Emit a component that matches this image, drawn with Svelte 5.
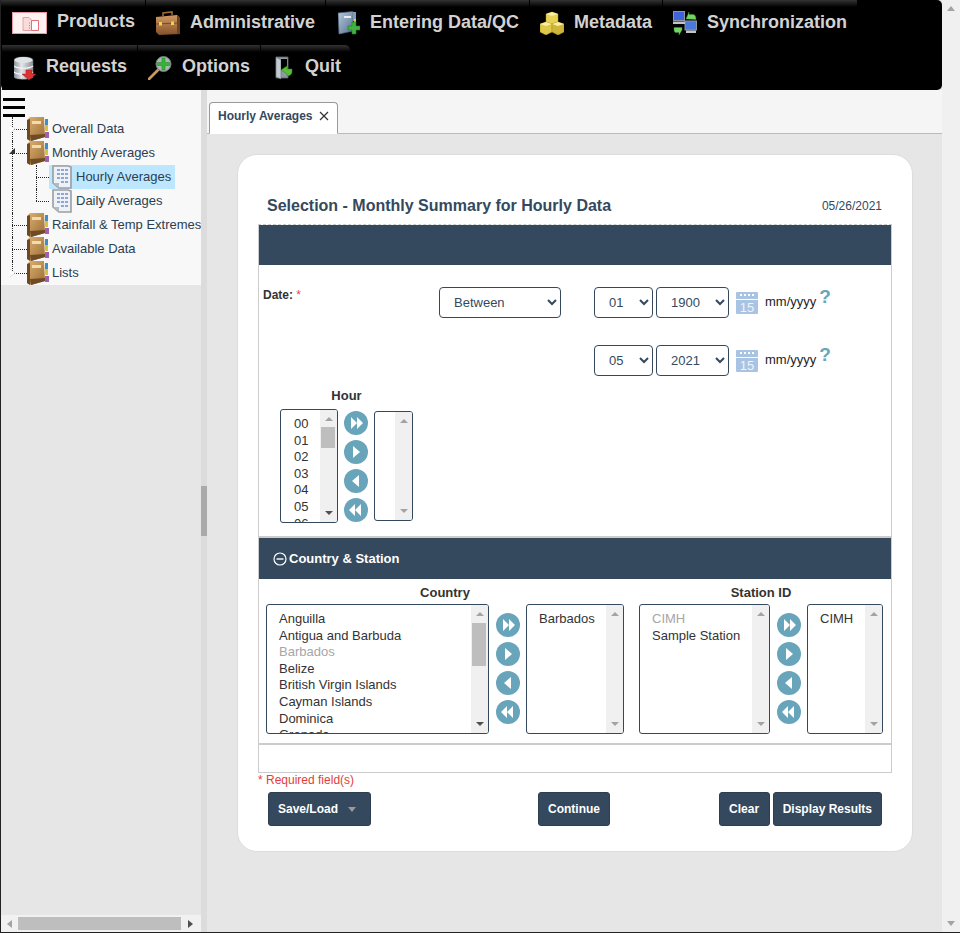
<script>
  const menuRows = [
    [
      { label: 'Products', icon: 'products' },
      { label: 'Administrative', icon: 'briefcase' },
      { label: 'Entering Data/QC', icon: 'docplus' },
      { label: 'Metadata', icon: 'cubes' },
      { label: 'Synchronization', icon: 'sync' },
    ],
    [
      { label: 'Requests', icon: 'database' },
      { label: 'Options', icon: 'magnifier' },
      { label: 'Quit', icon: 'door' },
    ],
  ];

  const tree = [
    { label: 'Overall Data', toggle: 'closed' },
    { label: 'Monthly Averages', toggle: 'open' },
    { label: 'Hourly Averages', child: true, selected: true },
    { label: 'Daily Averages', child: true, last: true },
    { label: 'Rainfall & Temp Extremes' },
    { label: 'Available Data' },
    { label: 'Lists', toggle: 'closed', end: true },
  ];

  const hours = ['00', '01', '02', '03', '04', '05', '06'];
  const countries = [
    'Anguilla',
    'Antigua and Barbuda',
    'Barbados',
    'Belize',
    'British Virgin Islands',
    'Cayman Islands',
    'Dominica',
    'Grenada',
  ];
  const arrows = ['M7 6l6 6-6 6zM13 6l6 6-6 6z', 'M9 6l7 6-7 6z', 'M15 6l-7 6 7 6z', 'M11 6l-6 6 6 6zM17 6l-6 6 6 6z'];
</script>

{#snippet menuIcon(name)}
  {#if name === 'products'}
    <svg class="ic-products" viewBox="0 0 35 22">
      <rect x="0.5" y="0.5" width="34" height="21" fill="#fdf1f1" stroke="#e8999f" />
      <path d="M11 5.500h6l3 3v10h-9z" fill="#f8dcdc" stroke="#e9a0a0" />
      <path d="M19.500 8.500h7v10h-7z" fill="#fff" stroke="#e56f76" />
      <path d="M17 11h1M17 13.500h1M17 16h1" stroke="#e56f76" />
    </svg>
  {:else if name === 'briefcase'}
    <svg viewBox="0 0 24 24">
      <defs>
        <linearGradient id="case" x1="0" y1="0" x2="0" y2="1"><stop offset="0" stop-color="#d29a62" /><stop offset="1" stop-color="#84502a" /></linearGradient>
      </defs>
      <path d="M7 5V2l9-1v3" fill="none" stroke="#9c6a38" stroke-width="1.600" />
      <path d="M0 6l21-2 3 3v16l-21 1-3-3z" fill="url(#case)" />
      <path d="M21 4l3 3v16l-3 .2z" fill="#6d4322" />
      <path d="M0 13l21-1" stroke="#7a4a25" />
      <rect x="3" y="11" width="3" height="3.500" fill="#ecd24f" />
      <rect x="15" y="10.500" width="3" height="3.500" fill="#ecd24f" />
    </svg>
  {:else if name === 'docplus'}
    <svg class="ic-narrow" viewBox="0 0 22 24">
      <defs>
        <linearGradient id="binder" x1="0" y1="0" x2="1" y2="1"><stop offset="0" stop-color="#b7cadb" /><stop offset="1" stop-color="#54708e" /></linearGradient>
      </defs>
      <path d="M0 2l15-1.500V20L1 23z" fill="url(#binder)" stroke="#51677f" stroke-width=".7" />
      <rect x="6" y="5" width="7" height="2" fill="#e6edf3" />
      <path d="M15 1h3v9h-3z" fill="#7c9cc0" />
      <path d="M16 8h2v3h-2z" fill="#e7c744" />
      <path d="M14 11h4v4h4v4h-4v4h-4v-4h-4v-4h4z" fill="#43b243" stroke="#1f7c25" stroke-width=".6" />
    </svg>
  {:else if name === 'cubes'}
    <svg viewBox="0 0 24 24">
      <path d="M6 3l6-2 6 2v8l-6 2-6-2z" fill="#e8d256" stroke="#a99326" stroke-width=".5" />
      <path d="M0 13l6-2 6 2v8l-6 3-6-3z" fill="#e0c848" stroke="#a99326" stroke-width=".5" />
      <path d="M12 13l6-2 6 2v8l-6 3-6-3z" fill="#cfb63a" stroke="#a99326" stroke-width=".5" />
      <path d="M0 13l6 2 6-2-6-2zM12 13l6 2 6-2-6-2zM6 3l6 2 6-2-6-2z" fill="#f9ef9f" />
    </svg>
  {:else if name === 'sync'}
    <svg viewBox="0 0 24 24">
      <rect x="0.500" y="0.500" width="11" height="9" fill="#3f63d8" stroke="#8d95a0" />
      <rect x="12" y="10" width="11.500" height="9" fill="#4a78df" stroke="#8d95a0" />
      <path d="M0 10.500h12v2.500H0zM13 19.500h10v2.500H13z" fill="#c2c6cb" />
      <path d="M13 8l3-7v2.500h4c2 0 3 2 3 5z" fill="#73d466" stroke="#3d9a35" stroke-width=".4" />
      <path d="M9 19l-3 5v-2.500H3c-2 0-2-2-2-5h8z" fill="#73d466" stroke="#3d9a35" stroke-width=".4" />
    </svg>
  {:else if name === 'database'}
    <svg class="ic-narrow" viewBox="0 0 22 24">
      <defs>
        <linearGradient id="cyl" x1="0" y1="0" x2="1" y2="0"><stop offset="0" stop-color="#8d959c" /><stop offset=".4" stop-color="#e3e6e9" /><stop offset="1" stop-color="#8a9097" /></linearGradient>
      </defs>
      <path d="M0 4c0-4 19-4 19 0v17c0 3-19 3-19 0z" fill="url(#cyl)" stroke="#788089" stroke-width=".5" />
      <ellipse cx="9.500" cy="4" rx="9" ry="3" fill="#dfe3e6" />
      <path d="M0 10c4 3 15 3 19 0M0 16c4 3 15 3 19 0" fill="none" stroke="#f4f5f6" stroke-width="1.200" />
      <path d="M12 14h6v4h4l-7 6-7-6h4z" fill="#dd3232" stroke="#a21c1c" stroke-width=".5" />
    </svg>
  {:else if name === 'magnifier'}
    <svg viewBox="0 0 24 24">
      <path d="M1 23L10 14" stroke="#c79a60" stroke-width="2.800" stroke-linecap="round" />
      <circle cx="15.500" cy="8" r="7.500" fill="#a9b6b6" stroke="#6f7a79" />
      <path d="M14 2h3v4.500h4.500v3H17V14h-3V9.500H9.500v-3H14z" fill="#38b338" stroke="#1c801f" stroke-width=".5" />
    </svg>
  {:else}
    <svg class="ic-door" viewBox="0 0 18 24">
      <path d="M1 1h12v21H1z" fill="#8f9aa1" stroke="#5d6972" stroke-width=".8" />
      <path d="M1 1l5 3v19l-5-2z" fill="#c3ccd2" stroke="#566067" stroke-width=".5" />
      <path d="M6 3h6v11H6z" fill="#000" />
      <path d="M6 14l6-4v3h5v3c0 2-2 4-5 4v-2z" fill="#5cbd36" stroke="#2d861a" stroke-width=".5" />
    </svg>
  {/if}
{/snippet}

{#snippet bookIcon()}
  <svg class="tree-icon" viewBox="0 0 22 24">
    <defs>
      <linearGradient id="bookFace" x1="0" y1="0" x2="1" y2="1"><stop offset="0" stop-color="#dcb271" /><stop offset="1" stop-color="#9a6a34" /></linearGradient>
    </defs>
    <path d="M0 3l3-3h14l1 20-14 4-4-2z" fill="url(#bookFace)" />
    <path d="M0 3l3-1v22l-3-2z" fill="#6e4822" />
    <path d="M3 18l15-1v3L4 24z" fill="#6f4a26" />
    <rect x="5" y="4" width="9" height="3" fill="#f0dcae" />
    <rect x="18" y="2" width="3" height="6" fill="#3f8fc4" />
    <rect x="18" y="8" width="3" height="6" fill="#d6c23c" />
    <rect x="18" y="15" width="4" height="6" fill="#a05fb0" />
  </svg>
{/snippet}

{#snippet sheetIcon()}
  <svg class="tree-icon child-icon" viewBox="0 0 20 24">
    <path d="M1 1h15l3 1v21H7l-6-5z" fill="#eef1f7" stroke="#9a9da1" stroke-width="1.600" />
    <path d="M1 18h6v5z" fill="#b8babd" />
    <path d="M5 5h11M5 9h11M5 13h11M9 17h7" stroke="#6f8fc7" stroke-width="1.400" stroke-dasharray="3 1" />
  </svg>
{/snippet}

{#snippet listbox(items, width, height, thumb = null, dimmed = '', left = 12)}
  <div class="listbox" style="width: {width}px; height: {height}px;">
    <div class="options" style="padding-left: {left}px;">
      {#each items as item}
        <div class:dim={item === dimmed}>{item}</div>
      {/each}
    </div>
    <div class="scrollbar">
      <span class="up"></span>
      {#if thumb}
        <span class="thumb" style="top: {thumb[0]}px; height: {thumb[1]}px;"></span>
      {/if}
      <span class="down" class:dark={!!thumb}></span>
    </div>
  </div>
{/snippet}

{#snippet mover()}
  <div class="mover">
    {#each arrows as d}
      <svg viewBox="0 0 24 24"><circle cx="12" cy="12" r="12" fill="#68a5bb" /><path {d} fill="#fff" /></svg>
    {/each}
  </div>
{/snippet}

{#snippet dateRow(month, year, leading)}
  <div class="date-row">
    <div class="date-lead">
      {#if leading}
        <div class="date-label">Date: <span class="req">*</span></div>
        <select class="sel sel-mode"><option>Between</option></select>
      {/if}
    </div>
    <select class="sel sel-month"><option>{month}</option></select>
    <select class="sel sel-year"><option>{year}</option></select>
    <svg class="cal" viewBox="0 0 22 22">
      <path d="M1 0h20a1 1 0 0 1 1 1v6H0V1a1 1 0 0 1 1-1z" fill="#a9c3e2" />
      <path d="M4 3h2M8 3h2M12 3h2M16 3h2" stroke="#fff" stroke-width="2" />
      <path d="M0 8h22v13a1 1 0 0 1-1 1H1a1 1 0 0 1-1-1z" fill="#a9c3e2" />
      <text x="11" y="20" text-anchor="middle" class="cal-day">15</text>
    </svg>
    <span class="fmt">mm/yyyy</span>
    <span class="help">?</span>
  </div>
{/snippet}

<div class="window">
  <div class="page">
    <header class="menubar">
      {#each menuRows as row}
        <nav class="menu-row">
          {#each row as item}
            <div class="menu-item {item.icon}">
              {@render menuIcon(item.icon)}
              <span>{item.label}</span>
            </div>
          {/each}
        </nav>
      {/each}
    </header>

    <div class="workspace">
      <aside class="sidebar">
        <div class="tree">
          <div class="hamburger"><i></i><i></i><i></i></div>
          {#each tree as node}
            <div class="tree-row" class:child={node.child} class:last={node.last} class:end={node.end}>
              <span class="trunk"></span>
              {#if node.child}<span class="branch"></span>{/if}
              <span class="twig">
                {#if node.toggle}<span class="toggle {node.toggle}"></span>{/if}
              </span>
              <div class="node" class:selected={node.selected}>
                {#if node.child}{@render sheetIcon()}{:else}{@render bookIcon()}{/if}
                <span>{node.label}</span>
              </div>
            </div>
          {/each}
        </div>
        <div class="hscroll">
          <span class="arrow-l"></span>
          <span class="hthumb"></span>
          <span class="arrow-r"></span>
        </div>
      </aside>

      <div class="splitter"><span></span></div>

      <main class="main">
        <div class="tabbar">
          <div class="tab">
            <span>Hourly Averages</span>
            <svg viewBox="0 0 10 10"><path d="M1 1l8 8M9 1l-8 8" stroke="#333" stroke-width="1.200" /></svg>
          </div>
        </div>

        <section class="card">
          <div class="card-title">
            <h1>Selection - Monthly Summary for Hourly Data</h1>
            <span>05/26/2021</span>
          </div>

          <div class="panel">
            <div class="band"></div>
            <div class="panel-body date-body">
              {@render dateRow('01', '1900', true)}
              {@render dateRow('05', '2021', false)}
              <div class="transfer hour">
                <div class="transfer-label">Hour</div>
                <div class="transfer-lists">
                  {@render listbox(hours, 58, 114, [17, 21], '', 13)}
                  {@render mover()}
                  {@render listbox([], 39, 110)}
                </div>
              </div>
            </div>

            <div class="band band-titled">
              <svg viewBox="0 0 14 14"><circle cx="7" cy="7" r="6" fill="none" stroke="#fff" stroke-width="1.200" /><path d="M3.500 7h7" stroke="#fff" stroke-width="1.400" /></svg>
              <span>Country &amp; Station</span>
            </div>
            <div class="panel-body station-body">
              <div class="transfer">
                <div class="transfer-label">Country</div>
                <div class="transfer-lists">
                  {@render listbox(countries, 223, 130, [18, 43], 'Barbados')}
                  {@render mover()}
                  {@render listbox(['Barbados'], 98, 130)}
                </div>
              </div>
              <div class="transfer">
                <div class="transfer-label">Station ID</div>
                <div class="transfer-lists">
                  {@render listbox(['CIMH', 'Sample Station'], 131, 130, null, 'CIMH')}
                  {@render mover()}
                  {@render listbox(['CIMH'], 76, 130)}
                </div>
              </div>
            </div>
            <div class="panel-foot"></div>
          </div>

          <div class="required">* Required field(s)</div>

          <div class="actions">
            <div class="group"><button class="save">Save/Load <span class="caret"></span></button></div>
            <button class="continue">Continue</button>
            <div class="group end"><button class="clear">Clear</button><button>Display Results</button></div>
          </div>
        </section>
      </main>
    </div>
  </div>

  <div class="vscroll"><span class="vup"></span><span class="vdown"></span></div>
</div>

<style>
  :global(body) {
    background: #f0f0f0;
    overflow: hidden;
  }

  .window {
    display: flex;
    height: 933px;
    font-family: 'Liberation Sans', Arial, sans-serif;
    color: #333;
    box-sizing: border-box;
    border-bottom: 1px solid #222;
  }

  .page {
    width: 942px;
    display: flex;
    flex-direction: column;
    box-sizing: border-box;
    border-left: 1px solid #222;
    background: #e6e6e6;
  }

  .vscroll {
    width: 18px;
    background: #f0f0f0;
    display: flex;
    flex-direction: column;
    justify-content: space-between;
    align-items: center;
    padding: 6px 0;
    box-sizing: border-box;
  }

  .vup, .vdown {
    width: 0;
    height: 0;
    border-left: 4px solid transparent;
    border-right: 4px solid transparent;
  }

  .vup { border-bottom: 5px solid #a3a3a3; }
  .vdown { border-top: 5px solid #a3a3a3; }

  /* menu */
  .menubar {
    height: 90px;
    background: #000;
    border-radius: 0 5px 5px 5px;
    flex-shrink: 0;
  }

  .menu-row {
    display: flex;
    height: 45px;
    gap: 1px;
  }

  .menu-row:last-child {
    padding-left: 1px;
  }

  .menu-row:last-child span {
    margin-top: -2px;
  }

  .menu-item {
    display: flex;
    align-items: center;
    gap: 10px;
    padding: 0 10px;
    height: 45px;
    box-sizing: border-box;
    background: linear-gradient(#333, #000 7px);
    font-size: 18px;
    font-weight: 700;
    color: #d2d2d2;
  }

  .menu-item span {
    white-space: nowrap;
  }

  .menu-item svg {
    width: 24px;
    height: 24px;
    flex-shrink: 0;
  }

  .menu-item .ic-products {
    width: 35px;
    height: 22px;
  }

  .menu-item .ic-narrow {
    width: 22px;
  }

  .menu-item .ic-door {
    width: 18px;
  }

  .menu-item.products {
    padding: 0 10px 0 11px;
    width: 144px;
  }

  .menu-item.products span { margin-top: -2px; }
  .menu-item.docplus { padding-left: 12px; width: 203px; }
  .menu-item.cubes { width: 132px; }
  .menu-item.database { padding-left: 12px; }
  .menu-item.door { padding-left: 14px; gap: 12px; padding-right: 9px; border-top-right-radius: 5px; }

  /* sidebar */
  .workspace {
    flex: 1;
    min-height: 0;
    display: flex;
  }

  .sidebar {
    width: 200px;
    flex-shrink: 0;
    display: flex;
    flex-direction: column;
    justify-content: space-between;
  }

  .tree {
    background: #f8f8f8;
    height: 195px;
    padding-top: 8px;
    box-sizing: border-box;
    color: #2c3e50;
    overflow: hidden;
  }

  .hamburger {
    display: flex;
    flex-direction: column;
    gap: 5px;
    margin-left: 2px;
    width: 22px;
    height: 19px;
  }

  .hamburger i {
    display: block;
    height: 3px;
    background: #000;
  }

  .tree-row {
    position: relative;
    display: flex;
    height: 24px;
    padding-left: 11px;
  }

  .trunk {
    position: absolute;
    left: 11px;
    top: 0;
    bottom: 0;
    border-left: 1px dotted #222;
  }

  .tree-row.end .trunk { bottom: 12px; }

  .twig {
    position: relative;
    width: 15px;
    height: 12px;
    border-bottom: 1px dotted #222;
    flex-shrink: 0;
  }

  .toggle {
    position: absolute;
    left: -2px;
    top: 8px;
    width: 0;
    height: 0;
  }

  .toggle.closed {
    border-left: 5px solid #fff;
    border-top: 4px solid transparent;
    border-bottom: 4px solid transparent;
    filter: drop-shadow(0 0 .6px #888);
  }

  .toggle.open {
    border-bottom: 6px solid #333;
    border-left: 6px solid transparent;
    top: 7px;
    left: -3px;
  }

  .tree-row.child { padding-left: 35px; }

  .branch {
    position: absolute;
    left: 35px;
    top: 0;
    height: 100%;
    border-left: 1px dotted #222;
  }

  .tree-row.last .branch { height: 12px; }

  .tree-row.child .twig { width: 13px; }

  .node {
    display: flex;
    align-items: center;
    height: 24px;
    gap: 3px;
    white-space: nowrap;
    font-size: 13px;
    flex: none;
  }

  .node span {
    margin-top: -2px;
  }

  .tree-row.child .node {
    padding: 0 4px 0 3px;
    gap: 4px;
  }

  .node.selected { background: #bde7ff; }

  .tree-icon {
    width: 22px;
    height: 24px;
    flex-shrink: 0;
  }

  .child-icon {
    width: 20px;
  }

  .hscroll {
    height: 17px;
    background: #f1f1f1;
    display: flex;
    align-items: center;
    padding-left: 6px;
  }

  .hthumb {
    width: 163px;
    height: 13px;
    background: #bebebe;
    margin: 0 7px 0 6px;
  }

  .arrow-l {
    width: 0;
    height: 0;
    border-right: 5px solid #a3a3a3;
    border-top: 4px solid transparent;
    border-bottom: 4px solid transparent;
  }

  .arrow-r {
    width: 0;
    height: 0;
    border-left: 5px solid #505050;
    border-top: 4px solid transparent;
    border-bottom: 4px solid transparent;
  }

  .splitter {
    width: 6px;
    flex-shrink: 0;
    background: #dcdcdc;
    padding-top: 396px;
    box-sizing: border-box;
  }

  .splitter span {
    display: block;
    height: 50px;
    background: #aaa;
  }

  /* main */
  .main {
    flex: 1;
    min-width: 0;
  }

  .tabbar {
    height: 44px;
    background: #f5f5f5;
    border-bottom: 1px solid #bbb;
    box-sizing: border-box;
    display: flex;
    align-items: flex-end;
    padding-left: 2px;
  }

  .tab {
    width: 129px;
    height: 32px;
    margin-bottom: -1px;
    background: #fff;
    border: 1px solid #999;
    border-bottom-color: #fff;
    border-radius: 4px 4px 0 0;
    box-sizing: border-box;
    display: flex;
    align-items: center;
    gap: 7px;
    padding: 0 0 4px 8px;
    font-size: 12px;
    font-weight: 700;
    color: #34495e;
  }

  .tab svg {
    width: 10px;
    height: 10px;
  }

  .card {
    width: 676px;
    height: 698px;
    margin: 20px 0 0 30px;
    background: #fff;
    border: 1px solid #ddd;
    border-radius: 20px;
    box-sizing: border-box;
    padding: 0 20px;
  }

  .card-title {
    height: 69px;
    padding: 0 10px 9px 9px;
    display: flex;
    justify-content: space-between;
    align-items: flex-end;
    box-sizing: border-box;
  }

  .card-title h1 {
    margin: 0;
    font-size: 16px;
    font-weight: 700;
    color: #34495e;
    line-height: 18px;
  }

  .card-title span {
    font-size: 12px;
    color: #34495e;
    line-height: 16px;
    margin-bottom: 1px;
  }

  .panel {
    width: 634px;
    border: 1px solid #ccc;
    border-top: 1px dashed #ccc;
    box-sizing: border-box;
  }

  .band {
    height: 40px;
    background: #34495e;
    display: flex;
    align-items: center;
    gap: 2px;
    padding-left: 14px;
    color: #fff;
    font-size: 13px;
    font-weight: 700;
  }

  .band-titled {
    height: 41px;
  }

  .band svg {
    width: 14px;
    height: 14px;
  }

  .panel-body {
    box-sizing: border-box;
    border-bottom: 2px solid #ccc;
  }

  .date-body {
    height: 273px;
    padding-top: 22px;
  }

  .date-row {
    display: flex;
    align-items: center;
    height: 31px;
    margin-bottom: 27px;
    padding-left: 4px;
  }

  .date-lead {
    width: 331px;
    display: flex;
    justify-content: space-between;
    padding-right: 33px;
    box-sizing: border-box;
    align-items: flex-start;
  }

  .date-label {
    font-size: 12px;
    font-weight: 700;
    color: #333;
    margin-top: 1px;
  }

  .req {
    color: #e04a4a;
    font-weight: 400;
  }

  .sel {
    height: 31px;
    border: 1px solid #34495e;
    border-radius: 4px;
    background: #fff;
    color: #34495e;
    font-family: inherit;
    font-size: 13px;
    padding: 0 10px;
    box-sizing: border-box;
  }

  .sel-mode { width: 122px; }
  .sel-month { width: 59px; margin-right: 3px; }
  .sel-year { width: 73px; margin-right: 7px; }

  .cal {
    width: 22px;
    height: 22px;
    margin: 1px 7px 0 0;
  }

  .cal-day {
    font-family: 'Liberation Sans', Arial, sans-serif;
    font-size: 13px;
    fill: #eef4fb;
  }

  .fmt {
    font-size: 13px;
    color: #222;
    margin-top: -2px;
  }

  .help {
    font-size: 19px;
    font-weight: 700;
    color: #68a5bb;
    margin: -11px 0 0 3px;
    line-height: 20px;
  }

  .transfer {
    display: flex;
    flex-direction: column;
    align-items: center;
    width: max-content;
  }

  .transfer.hour {
    margin: -15px 0 0 21px;
  }

  .transfer-label {
    font-size: 13px;
    font-weight: 700;
    color: #333;
    line-height: 16px;
    margin-bottom: 3px;
  }

  .hour .transfer-label { margin-bottom: 5px; }

  .transfer-lists {
    display: flex;
    align-items: center;
    gap: 6px;
  }

  .listbox {
    position: relative;
    border: 1px solid #34495e;
    border-radius: 3px;
    box-sizing: border-box;
    overflow: hidden;
    background: #fff;
    font-size: 13px;
    color: #333;
  }

  .options {
    padding-top: 6px;
    line-height: 16.600px;
  }

  .options .dim { color: #a6a6a6; }

  .scrollbar {
    position: absolute;
    right: 0;
    top: 0;
    bottom: 0;
    width: 17px;
    background: #f0f0f0;
  }

  .up, .down {
    position: absolute;
    left: 5px;
    width: 0;
    height: 0;
    border-left: 4px solid transparent;
    border-right: 4px solid transparent;
  }

  .up { top: 7px; border-bottom: 4px solid #a3a3a3; }
  .down { bottom: 7px; border-top: 4px solid #a3a3a3; }
  .down.dark { border-top-color: #505050; }

  .thumb {
    position: absolute;
    left: 1px;
    right: 2px;
    background: #bebebe;
  }

  .mover {
    display: flex;
    flex-direction: column;
    gap: 5px;
  }

  .mover svg {
    width: 24px;
    height: 24px;
    display: block;
  }

  .station-body {
    display: flex;
    gap: 15px;
    height: 166px;
    padding: 6px 0 0 7px;
  }

  .station-body .mover {
    margin: -1px 0 0 1px;
  }

  .panel-foot {
    height: 27px;
  }

  .required {
    font-size: 12px;
    color: #e33c3c;
    line-height: 14px;
  }

  .actions {
    display: grid;
    grid-template-columns: 1fr auto 1fr;
    margin: 5px 10px 0 10px;
  }

  .group {
    display: flex;
    gap: 3px;
  }

  .group.end {
    justify-content: flex-end;
  }

  button {
    height: 34px;
    background: #34495e;
    color: #fff;
    border: 1px solid #2c3e50;
    border-radius: 3px;
    padding: 0 9px;
    font-family: inherit;
    font-size: 12px;
    font-weight: 700;
  }

  .save {
    padding-right: 14px;
  }

  .continue {
    margin-right: 2px;
  }

  .clear {
    width: 51px;
  }

  .caret {
    display: inline-block;
    margin-left: 7px;
    border-left: 4px solid transparent;
    border-right: 4px solid transparent;
    border-top: 5px solid #9a9a9a;
    vertical-align: middle;
  }
</style>
